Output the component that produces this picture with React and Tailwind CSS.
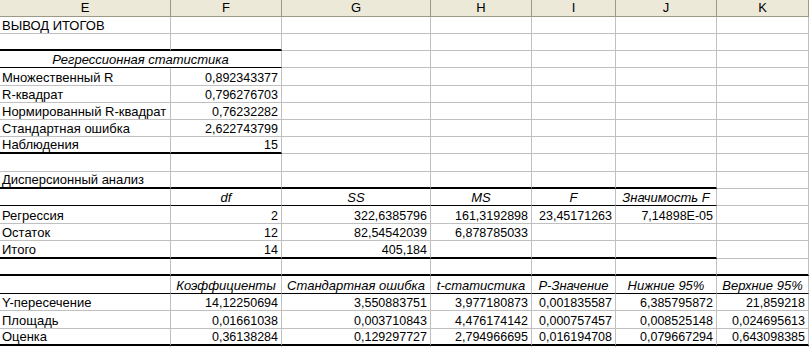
const COLS = ["E", "F", "G", "H", "I", "J", "K"];
const WIDTHS = [
  "w-[171px]",
  "w-[111px]",
  "w-[149px]",
  "w-[101px]",
  "w-[84px]",
  "w-[101px]",
  "w-[92px]",
];

// thick = number of columns (from E) with a heavy bottom rule, black = thin black rule
const ROWS = [
  { h: 17, cells: ["ВЫВОД ИТОГОВ"] },
  { h: 17, cells: [], thick: 2 },
  { h: 17, merged: "Регрессионная статистика", black: 2 },
  { h: 18, cells: ["Множественный R", "0,892343377"] },
  { h: 17, cells: ["R-квадрат", "0,796276703"] },
  { h: 17, cells: ["Нормированный R-квадрат", "0,76232282"] },
  { h: 17, cells: ["Стандартная ошибка", "2,622743799"] },
  { h: 17, cells: ["Наблюдения", "15"], thick: 2 },
  { h: 18, cells: [] },
  { h: 17, cells: ["Дисперсионный анализ"], thick: 6 },
  {
    h: 17,
    head: true,
    cells: ["", "df", "SS", "MS", "F", "Значимость F"],
    black: 6,
  },
  {
    h: 18,
    cells: [
      "Регрессия",
      "2",
      "322,6385796",
      "161,3192898",
      "23,45171263",
      "7,14898E-05",
    ],
  },
  { h: 17, cells: ["Остаток", "12", "82,54542039", "6,878785033"] },
  { h: 18, cells: ["Итого", "14", "405,184"], thick: 6 },
  { h: 17, cells: [], thick: 7 },
  {
    h: 18,
    head: true,
    cells: [
      "",
      "Коэффициенты",
      "Стандартная ошибка",
      "t-статистика",
      "P-Значение",
      "Нижние 95%",
      "Верхние 95%",
    ],
    black: 7,
  },
  {
    h: 17,
    cells: [
      "Y-пересечение",
      "14,12250694",
      "3,550883751",
      "3,977180873",
      "0,001835587",
      "6,385795872",
      "21,859218",
    ],
  },
  {
    h: 18,
    cells: [
      "Площадь",
      "0,01661038",
      "0,003710843",
      "4,476174142",
      "0,000757457",
      "0,008525148",
      "0,024695613",
    ],
  },
  {
    h: 17,
    cells: [
      "Оценка",
      "0,36138284",
      "0,129297727",
      "2,794966695",
      "0,016194708",
      "0,079667294",
      "0,643098385",
    ],
    thick: 7,
  },
  { h: 17, cells: [] },
];

const bottomRule = (row, i) => {
  if (i < (row.thick || 0)) return "border-b-2 border-b-black";
  if (i < (row.black || 0)) return "border-b border-b-black";
  return "border-b border-b-[#c0c0c0]";
};

const Cell = ({ row, i, text }) => {
  // labels and italic headings run a bit wider than the numbers in the original
  const align =
    i === 0
      ? "justify-start pl-[2px] text-[13px]"
      : row.head
      ? "justify-center italic text-[13px]"
      : "justify-end pr-[3px]";

  return (
    <div
      className={`${WIDTHS[i]} shrink-0 flex items-end ${align} border-r border-r-[#c0c0c0] ${bottomRule(
        row,
        i
      )}`}
    >
      <span className="whitespace-nowrap leading-[14px]">{text}</span>
    </div>
  );
};

const Row = ({ row }) => {
  const height = row.h === 18 ? "h-[18px]" : "h-[17px]";

  return (
    <div className={`flex ${height}`}>
      {row.merged ? (
        <>
          <div
            className={`w-[282px] shrink-0 flex items-end justify-center italic text-[13px] border-r border-r-[#c0c0c0] ${bottomRule(
              row,
              0
            )}`}
          >
            <span className="whitespace-nowrap leading-[14px]">
              {row.merged}
            </span>
          </div>
          {COLS.slice(2).map((_, idx) => (
            <Cell key={idx} row={row} i={idx + 2} text="" />
          ))}
        </>
      ) : (
        COLS.map((_, i) => (
          <Cell key={i} row={row} i={i} text={row.cells[i] || ""} />
        ))
      )}
    </div>
  );
};

const App = () => {
  return (
    <div className="w-[809px] h-[347px] overflow-hidden bg-white text-black text-[12.5px] font-['Liberation_Sans',Arial,sans-serif]">
      {/* column letters */}
      <div className="flex h-[17px] bg-[#ece9d8]">
        {COLS.map((col, i) => (
          <div
            key={col}
            className={`${WIDTHS[i]} shrink-0 flex items-center justify-center border-r border-r-[#9c9a86] border-b border-b-[#9c9a86]`}
          >
            <span className="leading-[14px] text-[13px]">{col}</span>
          </div>
        ))}
      </div>

      {ROWS.map((row, idx) => (
        <Row key={idx} row={row} />
      ))}
    </div>
  );
};

export default App;
